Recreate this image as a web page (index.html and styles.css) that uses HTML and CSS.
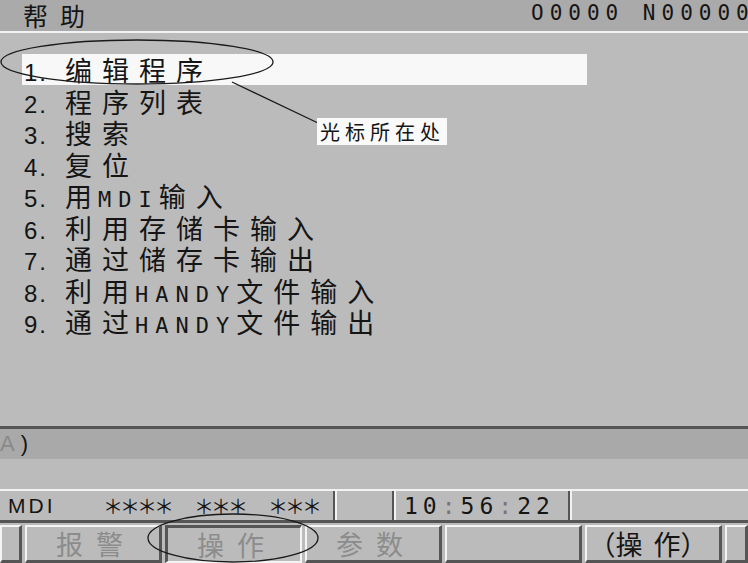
FILE: index.html
```html
<!DOCTYPE html>
<html lang="zh-CN">
<head>
    <meta charset="UTF-8">
    <title>帮助</title>
    <link rel="stylesheet" href="styles.css">
</head>
<body>
    <div class="screen">
        <header class="title-bar">
            <span class="title">帮助</span>
            <span class="prog-no">O0000 N00000</span>
        </header>
        <main class="help">
            <ul class="menu">
                <li class="active"><span class="num">1.</span>编辑程序</li>
                <li><span class="num">2.</span>程序列表</li>
                <li><span class="num">3.</span>搜索</li>
                <li><span class="num">4.</span>复位</li>
                <li><span class="num">5.</span>用<span class="lat">MDI</span>输入</li>
                <li><span class="num">6.</span>利用存储卡输入</li>
                <li><span class="num">7.</span>通过储存卡输出</li>
                <li><span class="num">8.</span>利用<span class="lat">HANDY</span>文件输入</li>
                <li><span class="num">9.</span>通过<span class="lat">HANDY</span>文件输出</li>
            </ul>
        </main>
        <div class="input-line"><span class="prompt">A</span>)</div>
        <div class="blank-line"></div>
        <div class="status">
            <div class="cell mode">
                <span class="mode-name">MDI</span>
                <span class="stars">＊＊＊＊</span>
                <span class="stars">＊＊＊</span>
                <span class="stars">＊＊＊</span>
            </div>
            <div class="cell small"></div>
            <div class="cell clock">10<span class="colon">:</span>56<span class="colon">:</span>22</div>
            <div class="cell rest"></div>
        </div>
        <div class="softkeys">
            <div class="key edge"></div>
            <div class="key dim">报警</div>
            <div class="key dim pressed">操作</div>
            <div class="key dim">参数</div>
            <div class="key"></div>
            <div class="key oper">（<span class="gap">操</span>作）</div>
            <div class="key edge"></div>
        </div>

        <svg class="marks" width="748" height="563" viewBox="0 0 748 563">
            <ellipse cx="137" cy="62" rx="136" ry="22" fill="none" stroke="#1a1a1a" stroke-width="1.3"/>
            <line x1="232" y1="82" x2="318" y2="123" stroke="#1a1a1a" stroke-width="1.3"/>
            <ellipse cx="233" cy="538" rx="85" ry="24" fill="none" stroke="#1a1a1a" stroke-width="1.3"/>
        </svg>
        <div class="callout">光标所在处</div>
    </div>
</body>
</html>
```

FILE: styles.css
```css
body {
    margin: 0;
    padding: 0;
    background: #bbbbbb;
    font-family: "Noto Sans CJK SC", sans-serif;
    color: #151515;
}
.screen {
    position: relative;
    width: 748px;
    height: 563px;
    overflow: hidden;
    background: #bbbbbb;
}
.title-bar {
    display: flex;
    align-items: center;
    height: 31px;
    background: #aaaaaa;
    border-bottom: 2px solid #f2f2f2;
}
.title {
    padding-left: 23px;
    font-size: 25px;
    letter-spacing: 12px;
    line-height: 31px;
}
.prog-no {
    margin-left: auto;
    width: 217px;
    white-space: nowrap;
    overflow: hidden;
    font-family: "DejaVu Sans Mono", monospace;
    font-size: 21px;
    letter-spacing: 6px;
    line-height: 26px;
    padding-bottom: 5px;
}
.help {
    height: 393px;
}
.menu {
    list-style: none;
    margin: 0;
    padding: 21px 0 0 22px;
}
.menu li {
    width: 563px;
    height: 31.5px;
    padding-left: 2px;
    font-size: 27px;
    line-height: 31px;
    letter-spacing: 10px;
    white-space: nowrap;
}
.menu li.active {
    background: #f8f8f8;
    height: 31px;
    margin-bottom: 0.5px;
}
.num {
    display: inline-block;
    width: 41px;
    letter-spacing: 2px;
    font-family: "Liberation Sans", sans-serif;
    font-size: 24px;
}
.lat {
    font-family: "DejaVu Sans Mono", monospace;
    font-size: 22px;
    letter-spacing: 7px;
    margin-left: -4px;
}
.input-line {
    height: 30px;
    border-top: 3px solid #555555;
    background: #a9a9a9;
    font-family: "Liberation Sans", sans-serif;
    font-size: 22px;
    line-height: 30px;
}
.prompt {
    color: #8a8a8a;
    margin-right: 6px;
}
.blank-line {
    height: 30px;
}
.status {
    display: flex;
    height: 34px;
    box-sizing: border-box;
    border-top: 2px solid #f2f2f2;
    border-bottom: 3px solid #555555;
}
.cell {
    box-sizing: border-box;
    border-left: 2px solid #f2f2f2;
    border-right: 2px solid #555555;
    display: flex;
    align-items: center;
    white-space: nowrap;
    flex-shrink: 0;
}
.mode {
    width: 335px;
    border-left: none;
    padding-left: 8px;
}
.mode-name {
    font-family: "Liberation Sans", sans-serif;
    font-size: 21px;
    letter-spacing: 3px;
    width: 95px;
    flex-shrink: 0;
}
.stars {
    font-size: 20px;
    letter-spacing: -3px;
    margin-right: 23px;
    flex-shrink: 0;
}
.small {
    width: 59px;
}
.clock {
    width: 176px;
    padding-left: 8px;
    font-family: "DejaVu Sans Mono", monospace;
    font-size: 23px;
    letter-spacing: 5px;
}
.colon {
    color: #777777;
}
.rest {
    flex: 1;
    border-right: none;
}
.softkeys {
    display: flex;
    gap: 3px;
    padding-top: 2px;
}
.key {
    box-sizing: border-box;
    width: 137px;
    height: 38px;
    flex-shrink: 0;
    border-top: 2px solid #f4f4f4;
    border-left: 2px solid #f4f4f4;
    border-right: 3px solid #555555;
    border-bottom: 3px solid #555555;
    display: flex;
    justify-content: center;
    align-items: center;
    font-size: 27px;
    letter-spacing: 13px;
    padding-left: 6px;
    white-space: nowrap;
}
.key.edge {
    width: 22px;
    padding-left: 0;
}
.key.edge:last-child {
    flex: 1;
}
.dim {
    color: #8c8c8c;
}
.pressed {
    border-top: 3px solid #555555;
    border-left: 3px solid #555555;
    border-right: 2px solid #f4f4f4;
    border-bottom: 2px solid #f4f4f4;
}
.oper {
    letter-spacing: 0;
    padding-left: 0;
    padding-right: 10px;
}
.gap {
    letter-spacing: 11px;
}
.marks {
    position: absolute;
    left: 0;
    top: 0;
    pointer-events: none;
}
.callout {
    position: absolute;
    left: 317px;
    top: 118px;
    width: 130px;
    height: 27px;
    background: #fafafa;
    font-size: 20px;
    line-height: 27px;
    letter-spacing: 5px;
    text-indent: 3px;
}
```
